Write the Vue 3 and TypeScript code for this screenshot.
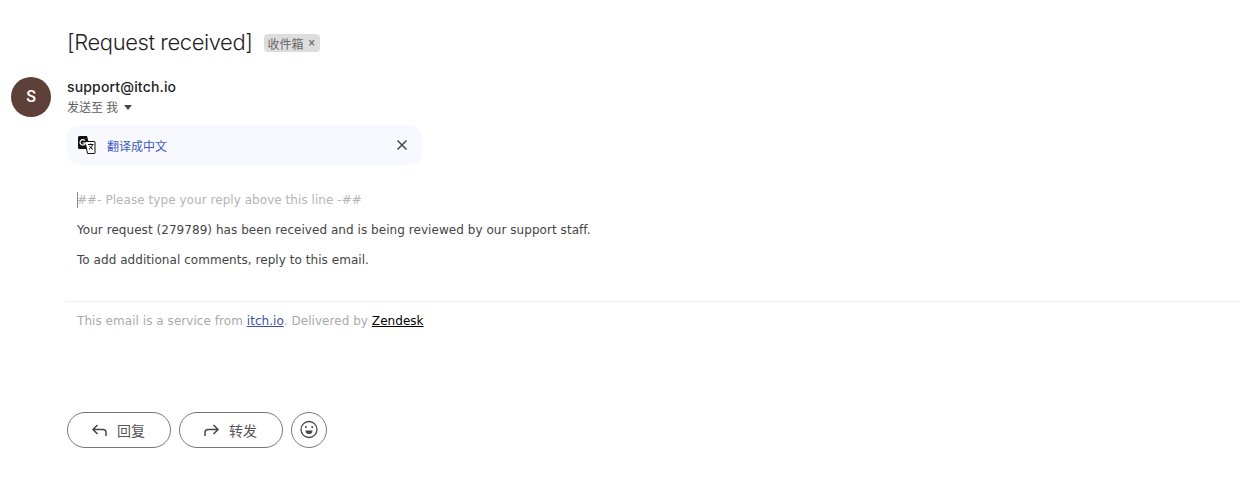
<template>
  <div class="page">
    <header class="subject">
      <h1>[Request received]</h1>
      <span class="label">收件箱 <i class="label-x">×</i></span>
    </header>

    <div class="message">
      <div class="avatar">S</div>
      <div class="main">
        <div class="sender">support@itch.io</div>
        <div class="to">
          发送至 我
          <span class="caret"></span>
        </div>

        <div class="translate">
          <svg class="translate-icon" viewBox="0 0 18 18">
            <path d="M0 1.500A1.500 1.500 0 0 1 1.500 0H9l3.500 13H1.500A1.500 1.500 0 0 1 0 11.500z" fill="#111" />
            <path d="M7 5.500h9.500a.5.500 0 0 1 .5.500v11a.5.500 0 0 1-.5.500H9.500z" fill="#fff" stroke="#111" />
            <path d="M6.800 4.600a2.700 2.700 0 1 0 .6 2.400H4.600" fill="none" stroke="#fff" stroke-width="1.200" />
            <path d="M10 8.500h5.500M12.700 7.500v1M14.600 8.500c-.5 2-1.900 3.800-3.600 4.800M11.500 10c.7 1.400 2 2.700 3.500 3.500" fill="none" stroke="#111" stroke-width="1" />
          </svg>
          <span class="translate-text">翻译成中文</span>
          <svg class="translate-close" viewBox="0 0 12 12">
            <path d="M1.500 1.500l9 9M10.500 1.500l-9 9" fill="none" stroke="#444746" stroke-width="1.500" />
          </svg>
        </div>

        <div class="body">
          <p class="reply-line"><span class="cursor"></span>##- Please type your reply above this line -##</p>
          <p>Your request (279789) has been received and is being reviewed by our support staff.</p>
          <p>To add additional comments, reply to this email.</p>
        </div>

        <div class="footer">
          This email is a service from <a class="blue">itch.io</a>. Delivered by <a class="black">Zendesk</a>
        </div>

        <div class="actions">
          <button class="pill">
            <svg viewBox="0 0 20 20"><path d="M8.500 5L4 9.500l4.500 4.500M4 9.500h10a3 3 0 0 1 3 3V16" fill="none" stroke="#444746" stroke-width="1.500" /></svg>
            回复
          </button>
          <button class="pill">
            <svg viewBox="0 0 20 20"><path d="M12.500 5L17 9.500 12.500 14M17 9.500H7a3 3 0 0 0-3 3V16" fill="none" stroke="#444746" stroke-width="1.500" /></svg>
            转发
          </button>
          <button class="round">
            <svg viewBox="0 0 20 20">
              <circle cx="10" cy="9.500" r="8" fill="none" stroke="#444746" stroke-width="1.300" />
              <circle cx="6.800" cy="7" r="1" fill="#444746" />
              <circle cx="13.200" cy="7" r="1" fill="#444746" />
              <path d="M6.500 10.500h7a3.500 3.500 0 0 1-7 0z" fill="#444746" />
            </svg>
          </button>
        </div>
      </div>
    </div>
  </div>
</template>

<script setup lang="ts"></script>

<style>
body {
  background: #fff;
}
</style>

<style scoped>
.page {
  width: 1240px;
  height: 490px;
  overflow: hidden;
  font-family: Roboto, "Noto Sans CJK SC", sans-serif;
  color: #1f1f1f;
}

.subject {
  display: flex;
  align-items: center;
  gap: 11px;
  height: 28px;
  padding: 29px 0 0 67px;
}

.subject h1 {
  margin: 0 0 2px;
  font-family: Inter, Roboto, sans-serif;
  font-size: 22px;
  font-weight: 300;
  letter-spacing: -0.42px;
  line-height: 28px;
  color: #1f1f1f;
}

.label {
  display: inline-flex;
  align-items: center;
  height: 18px;
  padding: 0 5px 0 4px;
  border-radius: 4px;
  background: #dddddd;
  color: #666666;
  font-size: 12px;
}

.label-x {
  margin-left: 5px;
  font-style: normal;
  font-size: 12px;
}

.message {
  display: flex;
  gap: 16px;
  padding: 20px 0 0 11px;
}

.avatar {
  flex: none;
  width: 40px;
  height: 40px;
  border-radius: 50%;
  background: #5d4037;
  color: #fff;
  font-size: 16px;
  font-weight: 500;
  line-height: 40px;
  text-align: center;
}

.main {
  flex: 1;
}

.sender {
  font-family: Inter, Roboto, sans-serif;
  font-size: 14px;
  font-weight: 500;
  letter-spacing: 0.16px;
  line-height: 20px;
}

.to {
  display: flex;
  align-items: center;
  height: 18px;
  color: #5e5e5e;
  font-size: 12px;
}

.caret {
  margin: 2px 0 0 6px;
  border: 4.500px solid transparent;
  border-top: 5px solid #444746;
  border-bottom: 0;
}

.translate {
  display: flex;
  align-items: center;
  width: 355px;
  height: 40px;
  margin-top: 10px;
  box-sizing: border-box;
  padding: 0 14px 0 11px;
  border-radius: 12px;
  background: #f8f9ff;
}

.translate-icon {
  width: 18px;
  height: 18px;
}

.translate-text {
  flex: 1;
  margin-left: 11px;
  color: #3c5ac0;
  font-size: 12px;
}

.translate-close {
  width: 12px;
  height: 12px;
}

.body {
  padding: 25px 10px 0;
  font-family: "DejaVu Sans", sans-serif;
  font-size: 12px;
  letter-spacing: 0.05px;
  line-height: 20px;
  color: #444444;
}

.body p {
  margin: 0 0 10px;
}

.reply-line {
  position: relative;
}

.body .reply-line {
  color: #b5b5b5;
}

.cursor {
  position: absolute;
  left: 0;
  top: 2px;
  width: 1px;
  height: 16px;
  background: #888888;
}

.footer {
  margin-top: 31px;
  padding: 9px 10px 0;
  border-top: 1px solid #eeeeee;
  font-family: "DejaVu Sans", sans-serif;
  font-size: 12px;
  letter-spacing: 0.05px;
  line-height: 20px;
  color: #aaaaaa;
}

.blue {
  color: #3c4fa8;
  text-decoration: underline;
}

.black {
  color: #000;
  text-decoration: underline;
}

.actions {
  display: flex;
  gap: 8px;
  margin-top: 81px;
}

.pill {
  display: flex;
  align-items: center;
  justify-content: center;
  gap: 8px;
  width: 104px;
  height: 36px;
  padding: 0 4px 0 0;
  border: 1px solid #747775;
  border-radius: 18px;
  background: #fff;
  color: #555555;
  font-family: inherit;
  font-size: 14px;
}

.pill svg {
  width: 20px;
  height: 20px;
}

.round {
  display: flex;
  align-items: center;
  justify-content: center;
  width: 36px;
  height: 36px;
  padding: 0;
  border: 1px solid #747775;
  border-radius: 50%;
  background: #fff;
}

.round svg {
  width: 20px;
  height: 20px;
}
</style>
